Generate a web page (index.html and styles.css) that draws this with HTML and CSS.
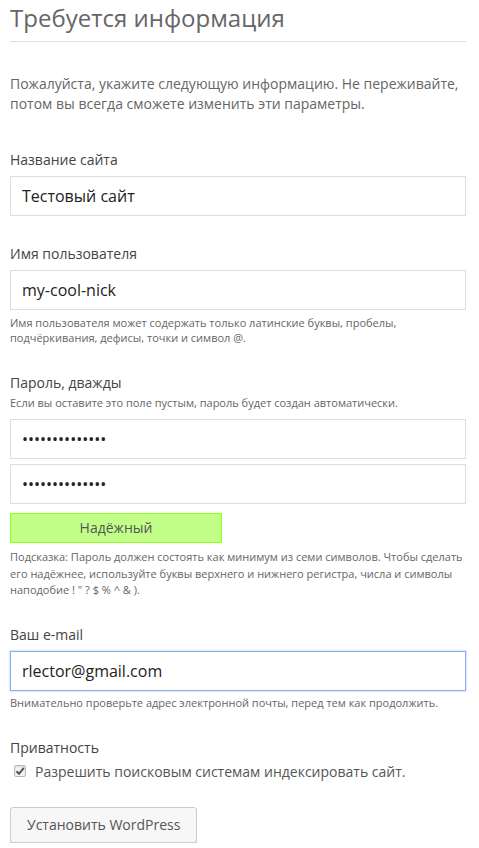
FILE: index.html
```html
<!DOCTYPE html>
<html>
<head>
    <meta charset="utf-8" />
    <title>Установка WordPress</title>
    <link rel="stylesheet" href="styles.css">
</head>
<body>
    <div class="wrap">
        <h1>Требуется информация</h1>
        <p class="intro">Пожалуйста, укажите следующую информацию. Не переживайте, потом вы всегда сможете изменить эти параметры.</p>

        <form>
            <div class="field first">
                <label for="weblog_title">Название сайта</label>
                <input id="weblog_title" type="text" value="Тестовый сайт" />
            </div>

            <div class="field">
                <label for="user_login">Имя пользователя</label>
                <input id="user_login" type="text" value="my-cool-nick" />
                <p class="desc">Имя пользователя может содержать только латинские буквы, пробелы, подчёркивания, дефисы, точки и символ @.</p>
            </div>

            <div class="field">
                <label for="pass1">Пароль, дважды</label>
                <p class="desc desc-top">Если вы оставите это поле пустым, пароль будет создан автоматически.</p>
                <input id="pass1" type="password" value="mycoolpass1234" />
                <input id="pass2" type="password" value="mycoolpass1234" class="second" />
                <div class="strength">Надёжный</div>
                <p class="desc hint">Подсказка: Пароль должен состоять как минимум из семи символов. Чтобы сделать его надёжнее, используйте буквы верхнего и нижнего регистра, числа и символы наподобие ! " ? $ % ^ &amp; ).</p>
            </div>

            <div class="field email">
                <label for="admin_email">Ваш e-mail</label>
                <input id="admin_email" type="text" value="rlector@gmail.com" class="focused" />
                <p class="desc">Внимательно проверьте адрес электронной почты, перед тем как продолжить.</p>
            </div>

            <div class="field">
                <label>Приватность</label>
                <div class="check">
                    <span class="box">
                        <svg width="10" height="10" viewBox="0 0 10 10">
                            <path d="M1.5 5.2 L4 7.8 L8.8 1.8" fill="none" stroke="#555" stroke-width="2" />
                        </svg>
                    </span>
                    <span>Разрешить поисковым системам индексировать сайт.</span>
                </div>
            </div>

            <p class="submit"><button type="button">Установить WordPress</button></p>
        </form>
    </div>
</body>
</html>
```

FILE: styles.css
```css
body {
    margin: 0;
    background: #fff;
    font-family: "Open Sans", sans-serif;
    color: #444;
}

.wrap {
    padding: 0 13px 0 10px;
}

h1 {
    margin: 0;
    padding: 4px 0 10px;
    border-bottom: 1px solid #dedede;
    font-size: 24px;
    font-weight: 400;
    color: #666;
    line-height: 27px;
}

.intro {
    margin: 32px 0 0;
    font-size: 14px;
    line-height: 20px;
    color: #666;
}

.field {
    margin-top: 28px;
}

.field.first {
    margin-top: 36px;
}

.field.email {
    margin-top: 26px;
}

label {
    display: block;
    font-size: 14px;
    color: #444;
    line-height: 20px;
    margin-bottom: 6px;
}

input[type="text"], input[type="password"] {
    display: block;
    width: 100%;
    box-sizing: border-box;
    height: 40px;
    padding: 0 11px;
    border: 1px solid #ddd;
    font-family: "Open Sans", sans-serif;
    font-size: 16px;
    color: #222;
    outline: none;
}

input.second {
    margin-top: 5px;
}

input.focused {
    border-color: #8ab0ee;
    box-shadow: 0 0 2px rgba(90, 140, 230, 0.6);
}

.desc {
    margin: 5px 0 0;
    font-size: 11px;
    line-height: 15px;
    color: #666;
}

.email .desc {
    margin-top: 4px;
}

.desc-top {
    margin: -4px 0 9px;
}

.strength {
    width: 212px;
    box-sizing: border-box;
    margin-top: 9px;
    padding: 4px 0;
    background: #c1ff88;
    border: 1px solid #8dff1c;
    text-align: center;
    font-size: 14px;
    line-height: 20px;
    color: #555;
}

.hint {
    margin-top: 6px;
    line-height: 16.5px;
}

.check {
    display: flex;
    align-items: center;
    gap: 9px;
    margin-top: -2px;
    padding-left: 4px;
}

.box {
    display: flex;
    align-items: center;
    justify-content: center;
    width: 10px;
    height: 10px;
    border: 1px solid #b4b9be;
    border-radius: 2px;
    background: #f4f4f4;
    box-shadow: inset 0 1px 2px rgba(0, 0, 0, 0.1);
}

.check span:last-child {
    font-size: 14px;
    color: #555;
}

.submit {
    margin: 26px 0 0;
}

button {
    height: 36px;
    padding: 0 16px;
    background: #f7f7f7;
    border: 1px solid #ccc;
    border-radius: 3px;
    box-shadow: 0 1px 0 #ccc;
    font-family: "Open Sans", sans-serif;
    font-size: 14px;
    color: #555;
    cursor: pointer;
}
```
